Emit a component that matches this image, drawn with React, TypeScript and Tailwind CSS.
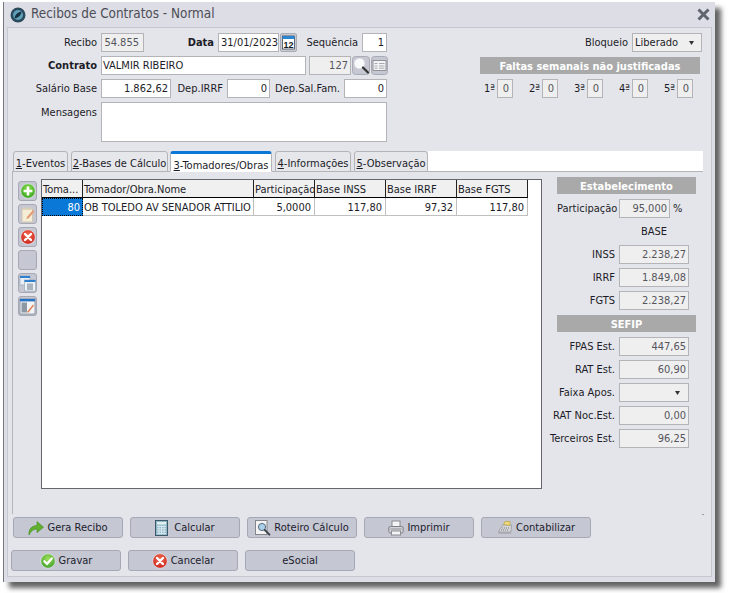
import type { ReactNode } from "react";

const gridColumns = ["Toma...", "Tomador/Obra.Nome", "Participação", "Base INSS", "Base IRRF", "Base FGTS"];

const baseFields = [
  { label: "INSS", value: "2.238,27" },
  { label: "IRRF", value: "1.849,08" },
  { label: "FGTS", value: "2.238,27" },
];

function Field({ className, value, readOnly }: { className: string; value?: string; readOnly?: boolean }) {
  return (
    <div
      className={`h-[19px] shrink-0 border border-[#b4b4b8] px-[2px] text-right leading-[18px] ${
        readOnly ? "bg-[#efefef] text-[#55555c]" : "bg-white text-[#1c1c28]"
      } ${className}`}
    >
      {value}
    </div>
  );
}

function Label({ className, children }: { className: string; children: ReactNode }) {
  return <div className={`shrink-0 whitespace-nowrap pt-[2px] text-right ${className}`}>{children}</div>;
}

function Arrow() {
  return (
    <svg width="5" height="4" viewBox="0 0 5 4">
      <path d="M0 0h5L2.5 4z" fill="#333" />
    </svg>
  );
}

function Section({ children }: { children: string }) {
  return (
    <div className="h-[17px] bg-[#a9a9a9] text-center text-[11px] font-bold leading-[20px] text-white">{children}</div>
  );
}

function StatRow({ label, value, children }: { label: string; value?: string; children?: ReactNode }) {
  return (
    <div className="-ml-[12px] flex h-[19px] items-center">
      <Label className="w-[70px]">{label}</Label>
      {children ?? <Field readOnly className="ml-[4px] w-[70px]" value={value} />}
    </div>
  );
}

function Tab({ className, n, text, active }: { className: string; n: string; text: string; active?: boolean }) {
  return (
    <div
      className={`h-[21px] shrink-0 whitespace-nowrap rounded-t-[3px] border border-[#b4b4b8] text-center leading-[23px] ${
        active ? "border-b-white border-t-[3px] border-t-[#0a78d7] bg-white leading-[20px]" : "bg-[#e6e7eb]"
      } ${className}`}
    >
      <u>{n}</u>-{text}
    </div>
  );
}

function CircleIcon({ id, from, to, children }: { id: string; from: string; to: string; children: ReactNode }) {
  return (
    <svg width="16" height="16" viewBox="0 0 16 16">
      <defs>
        <radialGradient id={id} cx="0.5" cy="0.35" r="0.7">
          <stop offset="0" stopColor={from} />
          <stop offset="1" stopColor={to} />
        </radialGradient>
      </defs>
      <circle cx="8" cy="8" r="7.2" fill={`url(#${id})`} stroke="#ffffff" strokeOpacity="0.6" strokeWidth="0.8" />
      {children}
    </svg>
  );
}

const PlusIcon = ({ id }: { id: string }) => (
  <CircleIcon id={id} from="#8fe04e" to="#2f9e1c">
    <path d="M8 3.6v8.8M3.6 8h8.8" stroke="#fff" strokeWidth="2.6" />
  </CircleIcon>
);
const CrossIcon = ({ id }: { id: string }) => (
  <CircleIcon id={id} from="#f4684f" to="#c8201a">
    <path d="M5 5l6 6M11 5l-6 6" stroke="#fff" strokeWidth="2.4" strokeLinecap="round" />
  </CircleIcon>
);
const CheckIcon = ({ id }: { id: string }) => (
  <CircleIcon id={id} from="#9fe05e" to="#3b9c2a">
    <path d="M4.4 8.2l2.6 2.6 4.8-5.4" stroke="#fff" strokeWidth="2.2" fill="none" strokeLinecap="round" />
  </CircleIcon>
);

function NoteIcon() {
  return (
    <svg width="16" height="17" viewBox="0 0 16 17">
      <rect x="2" y="3" width="10.5" height="13" fill="#f6edd6" stroke="#cfc6b2" />
      <path d="M3 1.5h8.5v2H3z" fill="#d9cfb8" />
      <path d="M7 11l6-7 1.6 1.3-6 7-2.2.8z" fill="#e39a72" />
    </svg>
  );
}

function WindowsIcon() {
  return (
    <svg width="17" height="17" viewBox="0 0 17 17">
      <rect x="1" y="1" width="10" height="9" fill="#e8eef4" stroke="#8fa3b5" strokeWidth="0.6" />
      <rect x="1" y="1" width="10" height="2" fill="#2f80cf" />
      <rect x="5.5" y="5" width="11" height="11" fill="#eef2f6" stroke="#8fa3b5" strokeWidth="0.6" />
      <rect x="5.5" y="5" width="11" height="2" fill="#2f80cf" />
      <rect x="8" y="8.5" width="6" height="6.5" fill="#a9b4bf" />
    </svg>
  );
}

function EditWindowIcon() {
  return (
    <svg width="17" height="17" viewBox="0 0 17 17">
      <rect x="1" y="1" width="15" height="15" fill="#f2f4f7" stroke="#6f7f90" strokeWidth="0.7" />
      <rect x="1" y="1" width="15" height="2.4" fill="#2473c4" />
      <rect x="2.5" y="4.5" width="5.5" height="10" fill="#8d98a5" />
      <path d="M8 14l6-7.5 1 .9-5.6 7.4z" fill="#e07f4f" />
    </svg>
  );
}

function CalendarIcon() {
  return (
    <svg width="17" height="19" viewBox="0 0 17 19">
      <rect x="0.5" y="0.5" width="16" height="18" rx="1.5" fill="#c8cad4" stroke="#a8aab4" />
      <rect x="2.5" y="3" width="12" height="13" fill="#fff" stroke="#26343f" strokeWidth="0.7" />
      <rect x="2.5" y="3" width="12" height="3" fill="#2c86cf" />
      <text x="8.5" y="14.8" textAnchor="middle" fontSize="9" fontWeight="700" fontFamily="'Liberation Sans', sans-serif" fill="#111a22">
        12
      </text>
    </svg>
  );
}

function SearchIcon() {
  return (
    <svg width="18" height="19" viewBox="0 0 18 19">
      <rect x="0.5" y="0.5" width="17" height="18" rx="3" fill="#c5c7d3" stroke="#a8aab4" />
      <circle cx="7.5" cy="7.5" r="5.6" fill="#f8f9fb" stroke="#c8ccd2" />
      <path d="M11 11.5l5 5" stroke="#333" strokeWidth="2.2" strokeLinecap="round" />
    </svg>
  );
}

function CardIcon() {
  return (
    <svg width="17" height="19" viewBox="0 0 17 19">
      <rect x="0.5" y="0.5" width="16" height="18" rx="3" fill="#c5c7d3" stroke="#a8aab4" />
      <rect x="2" y="4.5" width="13" height="10" fill="#f2f3f5" stroke="#7d8086" strokeWidth="0.8" />
      <path d="M3.5 7.5h3M3.5 10h3M3.5 12.2h3M8 7.5h5.5M8 10h5.5M8 12.2h5.5" stroke="#93969c" strokeWidth="0.8" />
    </svg>
  );
}

function ArrowIcon() {
  return (
    <svg width="16" height="16" viewBox="0 0 16 16">
      <path d="M1 15C0.5 9 3.5 6 9 5.6V1.6L15.5 7.2 9 12.6V9C5.5 9 3 11 1 15z" fill="#62b030" stroke="#3f8a1e" strokeWidth="0.6" />
    </svg>
  );
}

function CalcIcon() {
  return (
    <svg width="13" height="16" viewBox="0 0 13 16">
      <rect x="0.5" y="0.5" width="12" height="15" fill="#8fb8c8" stroke="#3a5868" />
      <rect x="2" y="2" width="9" height="2.6" fill="#e0eef2" />
      <path d="M2 6.5h9M2 8.8h9M2 11.1h9M2 13.4h9M4 5.5v9M6.5 5.5v9M9 5.5v9" stroke="#dcebf0" strokeWidth="0.9" />
    </svg>
  );
}

function DocSearchIcon() {
  return (
    <svg width="16" height="16" viewBox="0 0 16 16">
      <rect x="0.5" y="0.5" width="11.5" height="14" fill="#f4f4f4" stroke="#84868c" />
      <circle cx="7" cy="7" r="3.6" fill="#a8d0ea" stroke="#5a6a78" />
      <path d="M9.8 10l4.6 4.6" stroke="#40464e" strokeWidth="2" strokeLinecap="round" />
    </svg>
  );
}

function PrinterIcon() {
  return (
    <svg width="16" height="16" viewBox="0 0 16 16">
      <rect x="4" y="1" width="8" height="6" fill="#f4f4f6" stroke="#8a8c92" />
      <rect x="0.8" y="6.5" width="14.4" height="6.5" rx="1.5" fill="#d2d4da" stroke="#7c7e84" />
      <rect x="3.5" y="11" width="9" height="4" fill="#f4f4f6" stroke="#8a8c92" />
      <path d="M2.5 9h11" stroke="#8e9096" />
    </svg>
  );
}

function RegisterIcon() {
  return (
    <svg width="16" height="16" viewBox="0 0 16 16">
      <path d="M3.5 8L6 5h8.5L14 12H1.5z" fill="#d4d6da" stroke="#8a8c90" strokeWidth="0.6" />
      <path d="M6.5 4.5L8 1.5h5v4z" fill="#f0d87a" stroke="#b09a3a" strokeWidth="0.6" />
      <path d="M4 10h7M5 8h7" stroke="#777a80" strokeWidth="1" strokeDasharray="1 1" />
      <path d="M1.5 12H14v1.8H1.5z" fill="#a8aab0" />
    </svg>
  );
}

function ToolButton({ children }: { children?: ReactNode }) {
  return (
    <div className="flex h-[20px] w-[19px] items-center justify-center rounded-[3px] border border-[#a6a8b4] bg-[#c5c7d3]">
      {children}
    </div>
  );
}

function ActionButton({ icon, gap, children }: { icon?: ReactNode; gap?: string; children: string }) {
  return (
    <div
      className={`flex h-[21px] w-[110px] items-center justify-center rounded-[3px] border border-[#a6a8b4] bg-[#c5c7d3] text-[#20202c] ${
        gap ?? "gap-[3px]"
      }`}
    >
      {icon}
      <span className="pt-[2px]">{children}</span>
    </div>
  );
}

export default function App() {
  return (
    <div className="h-[593px] w-[730px] overflow-hidden bg-white pl-[3px] pt-[2px] font-['DejaVu_Sans_Condensed','DejaVu_Sans',sans-serif] text-[11px] text-[#1c1c28]">
      <div className="flex h-[580px] w-[712px] flex-col border-l border-[#77777f] bg-[#dcdde5] shadow-[6px_6px_5px_rgba(60,60,60,0.8)]">
        <div className="flex h-[25px] shrink-0 items-center pl-[6px] pr-[5px]">
          <svg width="16" height="16" viewBox="0 0 16 16">
            <circle cx="8" cy="8" r="7.5" fill="#2b4a5c" />
            <circle cx="8" cy="8" r="5" fill="#5f9fb8" />
            <path d="M4.5 11.5C5 8 7 5.5 11.5 4.5 11 8 9 10.5 4.5 11.5z" fill="#14303f" />
          </svg>
          <div className="ml-[5px] text-[13.4px] text-[#4d4d56]">Recibos de Contratos - Normal</div>
          <svg className="ml-auto" width="13" height="13" viewBox="0 0 13 13">
            <path d="M1.5 1.5l10 10M11.5 1.5l-10 10" stroke="#60646c" strokeWidth="3" />
          </svg>
        </div>

        <div className="mb-[5px] ml-[3px] mr-[3px] flex-1 border border-[#c6c7d0] bg-[#e4e5ea]">
          <div className="flex">
            <div className="w-[380px] shrink-0 pt-[5px]">
              <div className="flex h-[19px] items-center">
                <Label className="mr-[4px] w-[89px]">Recibo</Label>
                <Field readOnly className="w-[43px] !pr-[4px]" value="54.855" />
                <Label className="mr-[4px] w-[70px] font-bold">Data</Label>
                <Field className="w-[61px]" value="31/01/2023" />
                <div className="ml-[1px] w-[17px] shrink-0">
                  <CalendarIcon />
                </div>
                <Label className="mr-[4px] w-[61px]">Sequência</Label>
                <Field className="w-[25px]" value="1" />
              </div>
              <div className="mt-[4px] flex h-[19px] items-center">
                <Label className="mr-[4px] w-[89px] font-bold">Contrato</Label>
                <div className="h-[19px] w-[205px] shrink-0 border border-[#b4b4b8] bg-white px-[1px] leading-[18px]">
                  VALMIR RIBEIRO
                </div>
                <Field readOnly className="ml-[3px] w-[42px]" value="127" />
                <div className="ml-[1px] w-[18px] shrink-0">
                  <SearchIcon />
                </div>
                <div className="ml-[1px] w-[17px] shrink-0">
                  <CardIcon />
                </div>
              </div>
              <div className="mt-[4px] flex h-[19px] items-center">
                <Label className="mr-[4px] w-[89px]">Salário Base</Label>
                <Field className="w-[70px]" value="1.862,62" />
                <Label className="mr-[4px] w-[52px]">Dep.IRRF</Label>
                <Field className="w-[43px]" value="0" />
                <Label className="mr-[4px] w-[70px]">Dep.Sal.Fam.</Label>
                <Field className="w-[43px]" value="0" />
              </div>
              <div className="mt-[4px] flex">
                <Label className="mr-[4px] w-[89px] !pt-[3px]">Mensagens</Label>
                <div className="h-[40px] w-[286px] shrink-0 border border-[#b4b4b8] bg-white" />
              </div>
            </div>

            <div className="ml-[92px] w-[222px] shrink-0 pt-[5px]">
              <div className="flex h-[19px] items-center justify-end">
                <Label className="mr-[4px]">Bloqueio</Label>
                <div className="flex h-[19px] w-[70px] items-center justify-between border border-[#b4b4b8] bg-[#efefef] pl-[2px] pr-[7px]">
                  <span className="pt-[2px]">Liberado</span>
                  <Arrow />
                </div>
              </div>
              <div className="mt-[5px] w-[220px]">
                <Section>Faltas semanais não justificadas</Section>
              </div>
              <div className="mt-[5px] flex gap-[12px]">
                {["1ª", "2ª", "3ª", "4ª", "5ª"].map((week) => (
                  <div key={week} className="flex h-[19px] w-[33px] items-center justify-end gap-[2px]">
                    <span className="pt-[2px]">{week}</span>
                    <Field readOnly className="w-[16px] !px-[3px]" value="0" />
                  </div>
                ))}
              </div>
            </div>
          </div>

          <div className="ml-[4px] mt-[9px] w-[691px]">
            <div className="flex h-[21px] items-start border-b border-[#b4b4b8]">
              <div className="flex w-[416px] shrink-0 pl-[1px]">
                <Tab className="w-[55px]" n="1" text="Eventos" />
                <Tab className="ml-[3px] w-[97px]" n="2" text="Bases de Cálculo" />
                <Tab active className="ml-[2px] w-[102px]" n="3" text="Tomadores/Obras" />
                <Tab className="ml-[3px] w-[76px]" n="4" text="Informações" />
                <Tab className="ml-[3px] w-[74px]" n="5" text="Observação" />
              </div>
              <div className="h-[20px] flex-1 bg-white" />
            </div>

            <div className="flex h-[342px] border-l border-[#b4b4b8]">
              <div className="ml-[5px] mt-[9px] flex w-[19px] shrink-0 flex-col gap-[3px]">
                <ToolButton>
                  <PlusIcon id="tool-plus" />
                </ToolButton>
                <ToolButton>
                  <NoteIcon />
                </ToolButton>
                <ToolButton>
                  <CrossIcon id="tool-cross" />
                </ToolButton>
                <ToolButton />
                <ToolButton>
                  <WindowsIcon />
                </ToolButton>
                <ToolButton>
                  <EditWindowIcon />
                </ToolButton>
              </div>

              <div className="ml-[4px] mt-[7px] h-[310px] w-[501px] shrink-0 border border-[#66666c] bg-white">
                <div className="grid w-max grid-cols-[41px_171px_61px_71px_71px_71px]">
                  {gridColumns.map((column) => (
                    <div
                      key={column}
                      className="h-[18px] overflow-hidden whitespace-nowrap border-b border-r border-b-black border-r-[#222] bg-[#f0f0f0] pl-[1px] leading-[19px]"
                    >
                      {column}
                    </div>
                  ))}
                  <div className="h-[18px] border border-dotted border-black bg-[#0a78d7] pr-[2px] text-right leading-[17px] text-white">
                    80
                  </div>
                  <div className="h-[18px] overflow-hidden whitespace-nowrap border-b border-r border-[#c0c0c0] pl-[1px] leading-[19px]">
                    OB TOLEDO AV SENADOR ATTILIO
                  </div>
                  {["5,0000", "117,80", "97,32", "117,80"].map((cell, i) => (
                    <div
                      key={i}
                      className="h-[18px] border-b border-r border-[#c0c0c0] pr-[3px] text-right leading-[19px]"
                    >
                      {cell}
                    </div>
                  ))}
                </div>
              </div>

              <div className="ml-[15px] mt-[5px] w-[139px] shrink-0">
                <Section>Estabelecimento</Section>
                <div className="mt-[5px] flex h-[19px] items-center">
                  <Label className="w-[58px]">Participação</Label>
                  <Field readOnly className="ml-[4px] w-[51px]" value="95,000" />
                  <span className="ml-[3px] pt-[2px]">%</span>
                </div>
                <div className="mt-[5px] h-[22px] pl-[62px] text-center leading-[18px]">
                  <div className="w-[70px]">BASE</div>
                </div>
                <div className="flex flex-col gap-[4px]">
                  {baseFields.map((f) => (
                    <StatRow key={f.label} label={f.label} value={f.value} />
                  ))}
                </div>
                <div className="mt-[5px]">
                  <Section>SEFIP</Section>
                </div>
                <div className="mt-[5px] flex flex-col gap-[4px]">
                  <StatRow label="FPAS Est." value="447,65" />
                  <StatRow label="RAT Est." value="60,90" />
                  <StatRow label="Faixa Apos.">
                    <div className="ml-[4px] flex h-[19px] w-[70px] items-center justify-end border border-[#b4b4b8] bg-[#efefef] pr-[8px]">
                      <Arrow />
                    </div>
                  </StatRow>
                  <StatRow label="RAT Noc.Est." value="0,00" />
                  <StatRow label="Terceiros Est." value="96,25" />
                </div>
              </div>
            </div>
          </div>

          <div className="ml-[694px] h-px w-[2px] bg-[#9a9aa2]" />
          <div className="ml-[5px] mt-[2px] flex gap-[7px]">
            <ActionButton icon={<ArrowIcon />}>Gera Recibo</ActionButton>
            <ActionButton icon={<CalcIcon />} gap="gap-[6px]">
              Calcular
            </ActionButton>
            <ActionButton icon={<DocSearchIcon />}>Roteiro Cálculo</ActionButton>
            <ActionButton icon={<PrinterIcon />}>Imprimir</ActionButton>
            <ActionButton icon={<RegisterIcon />}>Contabilizar</ActionButton>
          </div>
          <div className="ml-[3px] mt-[12px] flex gap-[7px]">
            <ActionButton icon={<CheckIcon id="btn-check" />}>Gravar</ActionButton>
            <ActionButton icon={<CrossIcon id="btn-cross" />}>Cancelar</ActionButton>
            <ActionButton>eSocial</ActionButton>
          </div>
        </div>
      </div>
    </div>
  );
}
